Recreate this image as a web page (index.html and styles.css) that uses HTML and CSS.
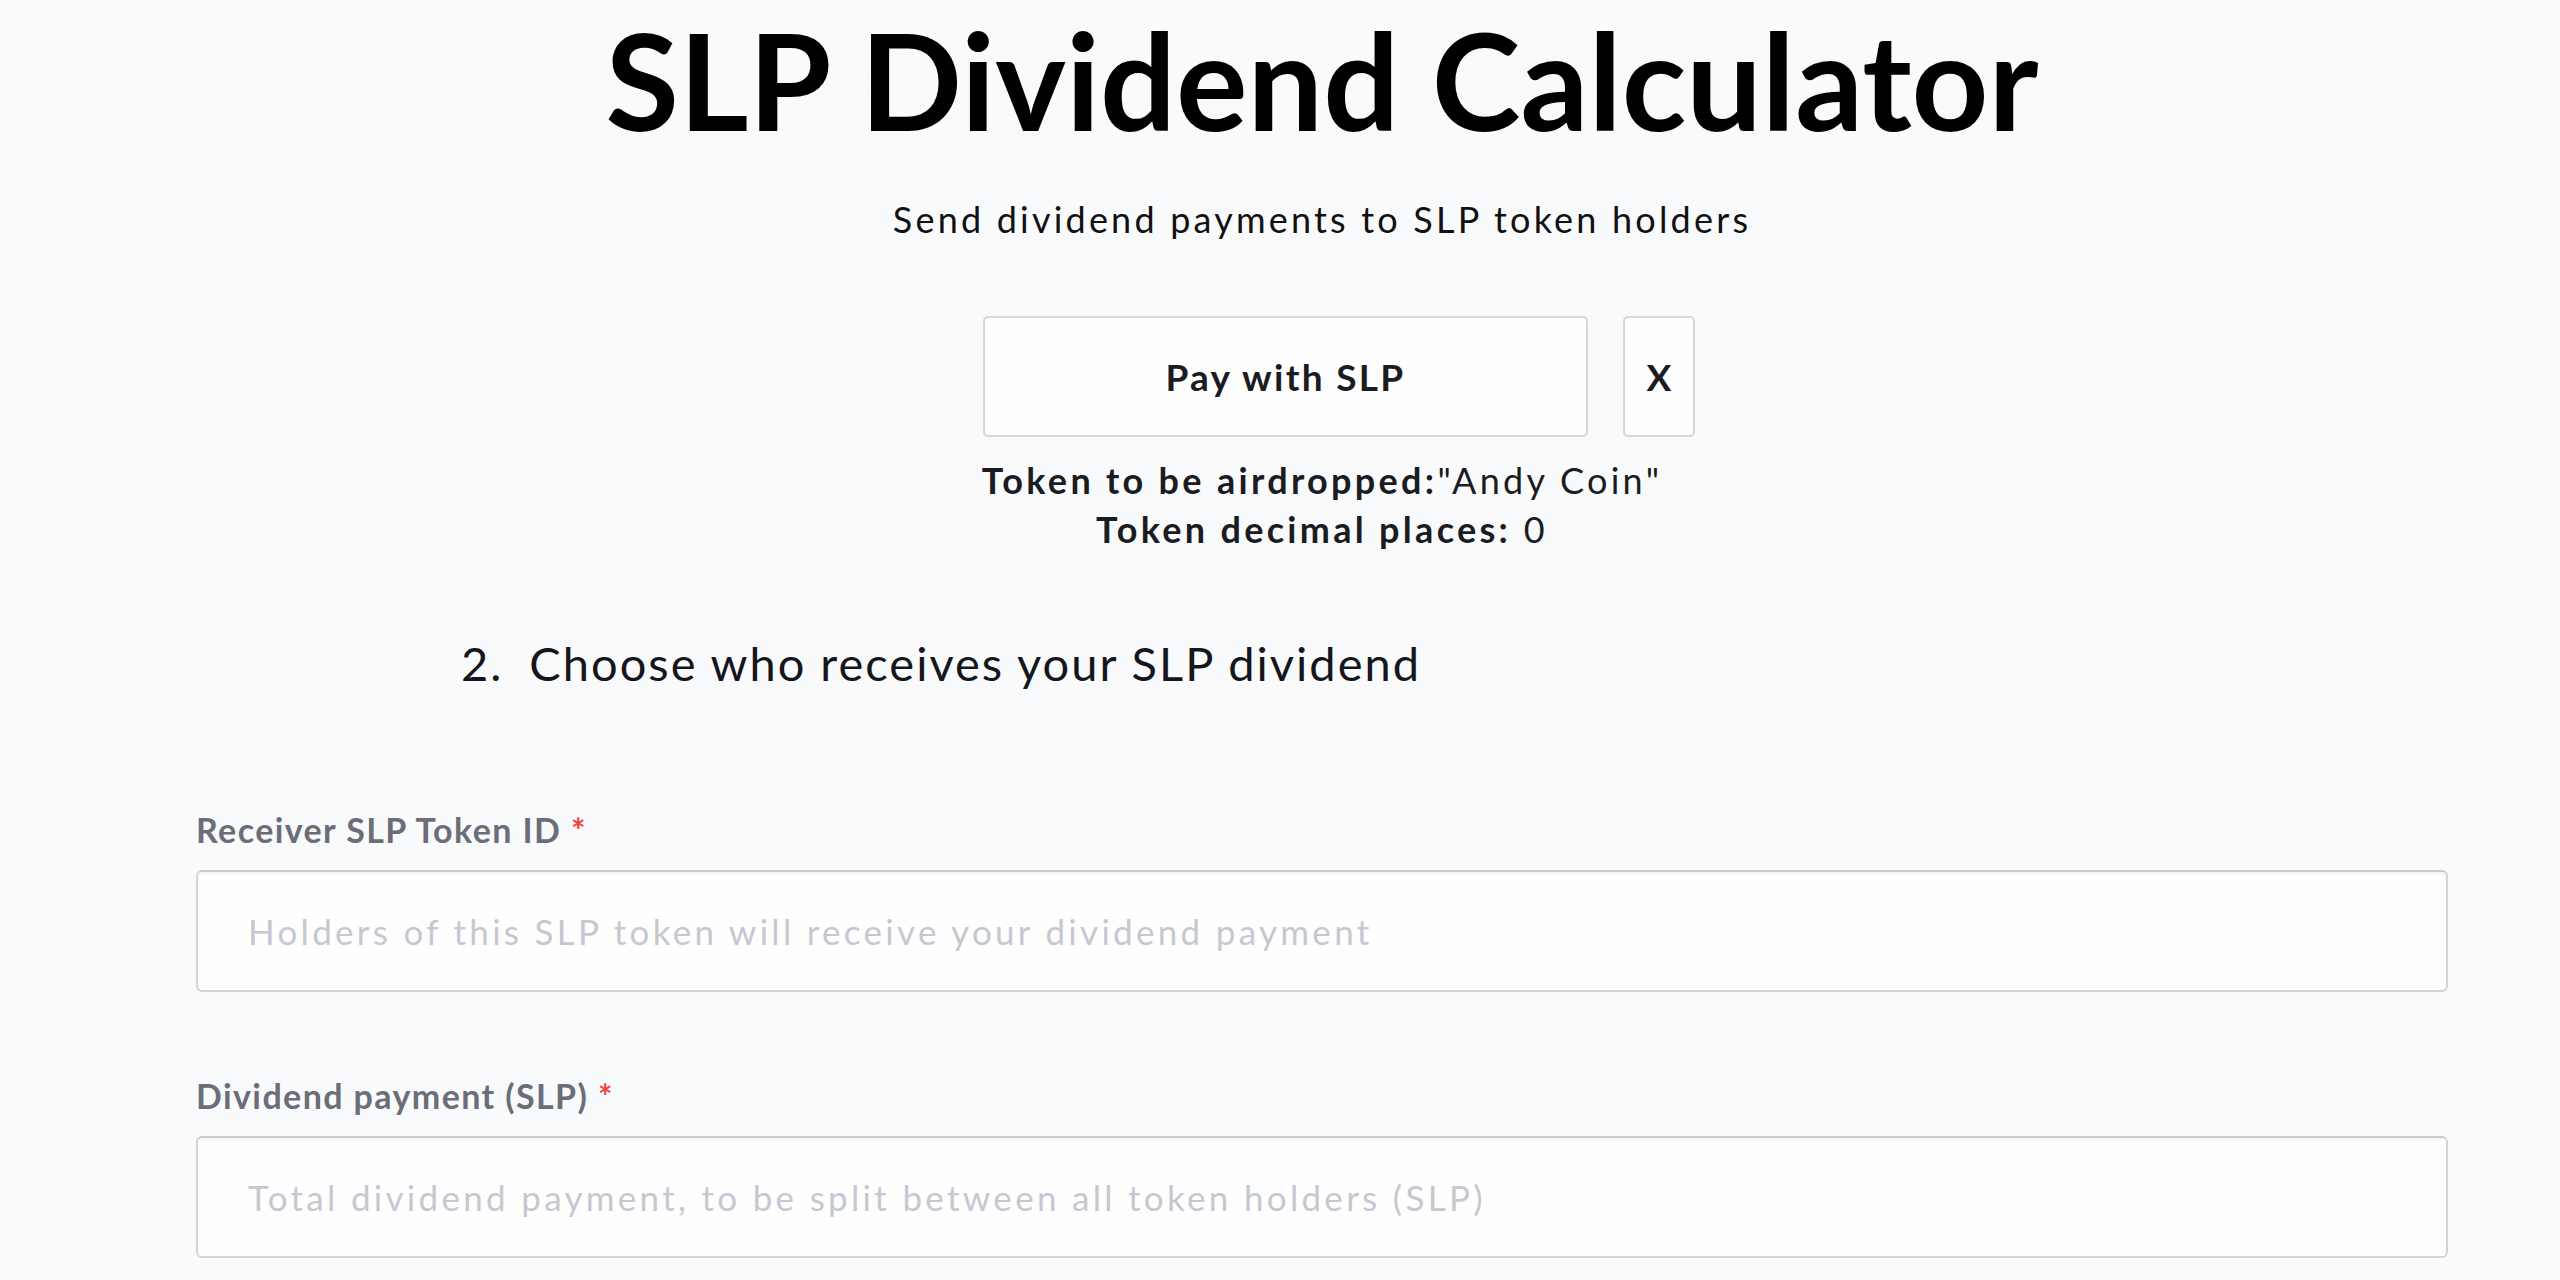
FILE: index.html
```html
<!DOCTYPE html>
<html lang="en">
<head>
<meta charset="utf-8">
<title>SLP Dividend Calculator</title>
<link rel="stylesheet" href="styles.css">
</head>
<body>
<main class="page">
  <h1 class="title">SLP Dividend Calculator</h1>
  <p class="subtitle">Send dividend payments to SLP token holders</p>
  <div class="pay-row">
    <button class="btn pay-btn" type="button">Pay with SLP</button>
    <button class="btn clear-btn" type="button">X</button>
  </div>
  <div class="token-info">
    <p class="info-line"><strong>Token to be airdropped:</strong>"Andy Coin"</p>
    <p class="info-line"><strong>Token decimal places:</strong> 0</p>
  </div>
  <div class="step">
    <span class="step-num">2.</span>
    <span class="step-text">Choose who receives your SLP dividend</span>
  </div>
  <form class="form">
    <div class="field">
      <label class="label" for="tokenId">Receiver SLP Token ID <span class="req">*</span></label>
      <input class="input" id="tokenId" type="text" placeholder="Holders of this SLP token will receive your dividend payment">
    </div>
    <div class="field">
      <label class="label" for="amount">Dividend payment (SLP) <span class="req">*</span></label>
      <input class="input" id="amount" type="text" placeholder="Total dividend payment, to be split between all token holders (SLP)">
    </div>
  </form>
</main>
</body>
</html>
```
FILE: styles.css
```css
html, body {
  margin: 0;
  padding: 0;
  background: #f9fafc;
}

body {
  font-family: "Lato", "Noto Sans", sans-serif;
  color: #111;
  overflow: hidden;
}

.page {
  padding: 5px 112px 0 196px;
  display: flex;
  flex-direction: column;
  align-items: center;
}

.title {
  margin: 0;
  font-size: 134px;
  line-height: 150px;
  font-weight: 700;
  color: #000;
  text-align: center;
}

.subtitle {
  margin: 40px 0 0;
  font-size: 36px;
  line-height: 48px;
  letter-spacing: 3.2px;
  color: #111;
  text-align: center;
}

.pay-row {
  margin-top: 73px;
  display: flex;
  gap: 35px;
  padding-left: 34px;
}

.btn {
  font-family: inherit;
  height: 121px;
  background: #fefefe;
  border: 2px solid #d6d7da;
  border-radius: 5px;
  font-size: 37px;
  font-weight: 700;
  letter-spacing: 2.3px;
  color: #1b1c22;
  cursor: pointer;
}

.pay-btn {
  width: 605px;
}

.clear-btn {
  width: 72px;
  padding: 0;
  letter-spacing: 0;
}

.token-info {
  margin-top: 19px;
  text-align: center;
}

.info-line {
  margin: 0;
  font-size: 36px;
  line-height: 49px;
  letter-spacing: 3.3px;
  color: #1b1c22;
}

.info-line strong {
  font-weight: 700;
}

.step {
  align-self: stretch;
  margin-top: 79px;
  padding-left: 265px;
  display: flex;
  gap: 26px;
  font-size: 47px;
  line-height: 60px;
  letter-spacing: 2px;
  color: #15161b;
}

.form {
  align-self: stretch;
  margin-top: 117px;
  display: flex;
  flex-direction: column;
  gap: 84px;
}

.field {
  display: flex;
  flex-direction: column;
  gap: 20px;
}

.label {
  font-size: 34px;
  line-height: 40px;
  font-weight: 700;
  letter-spacing: 1.4px;
  color: #6b6e78;
}

.req {
  color: #ef4444;
}

.input {
  box-sizing: border-box;
  height: 122px;
  width: 100%;
  padding: 0 50px;
  background: #fefefe;
  border: 2px solid #d3d4d6;
  border-top-color: #c9cacc;
  border-radius: 6px;
  box-shadow: inset 0 2px 2px rgba(0, 0, 0, 0.04);
  font-family: inherit;
  font-size: 35px;
  letter-spacing: 3.3px;
  color: #111;
  outline: none;
}

.input::placeholder {
  color: #c5c8d1;
}
```
